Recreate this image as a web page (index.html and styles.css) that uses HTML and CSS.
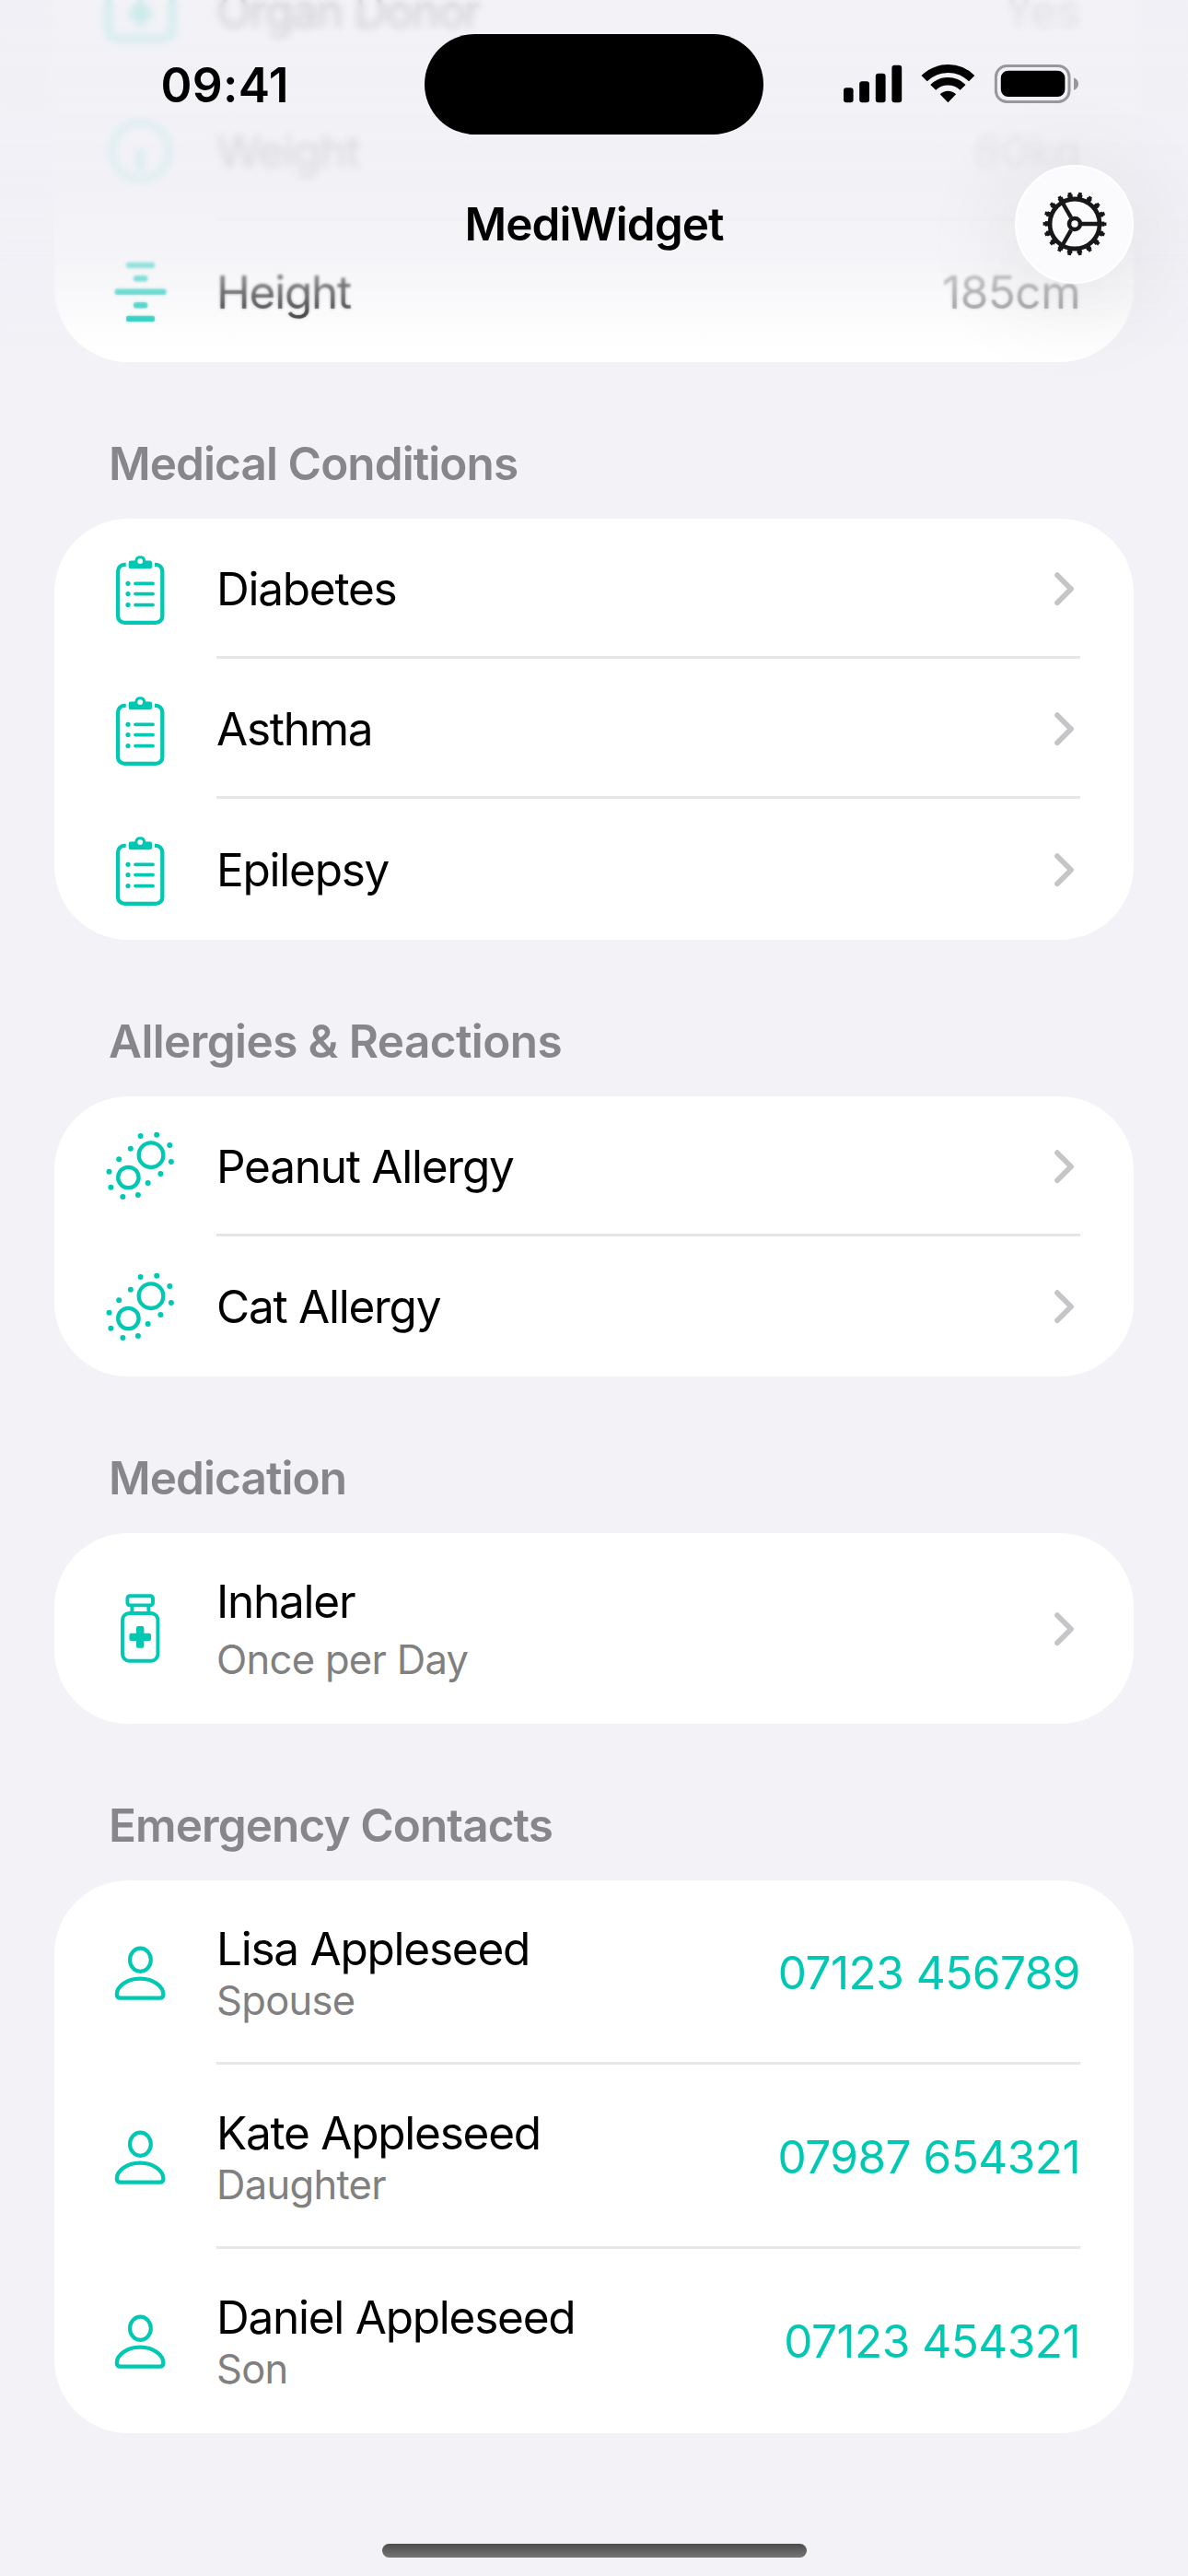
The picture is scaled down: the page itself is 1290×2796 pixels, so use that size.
FILE: index.html
```html
<!DOCTYPE html>
<html lang="en">
<head>
<meta charset="utf-8">
<title>MediWidget</title>
<link rel="stylesheet" href="styles.css">
</head>
<body>
<svg class="sprite" width="0" height="0" aria-hidden="true">
  <symbol id="donor" viewBox="0 0 90 90">
    <rect x="11" y="13" width="69" height="64" rx="8" fill="none" stroke="currentColor" stroke-width="7"/>
    <path d="M45.500 34L60 49.500 45.500 66 31 49.500z" fill="currentColor"/>
  </symbol>
  <symbol id="weight" viewBox="0 0 90 90">
    <circle cx="45.500" cy="46" r="31" fill="none" stroke="currentColor" stroke-width="6"/>
    <path d="M45.500 44v24" stroke="currentColor" stroke-width="9"/>
  </symbol>
  <symbol id="height" viewBox="0 0 90 90">
    <g fill="currentColor">
      <rect x="30" y="14.500" width="31" height="6.600" rx="2"/>
      <rect x="37.800" y="29" width="15.600" height="6.600" rx="3"/>
      <rect x="17.600" y="43.500" width="56" height="6.600" rx="2.500"/>
      <rect x="37.800" y="58" width="15.600" height="6.600" rx="3"/>
      <rect x="30" y="72.700" width="31" height="6.600" rx="2"/>
    </g>
  </symbol>
  <symbol id="clipboard" viewBox="0 0 90 90">
    <path d="M29.700 20.900h-1.600a7 7 0 0 0-7 7v49a7 7 0 0 0 7 7h34.200a7 7 0 0 0 7-7v-49a7 7 0 0 0-7-7H61" fill="none" stroke="currentColor" stroke-width="4.300"/>
    <path fill-rule="evenodd" d="M35 16.600h4.300a6 6 0 0 1 11.900 0H56q2 0 2 2v4.700q0 2-2 2H34.700q-2 0-2-2v-4.700q0-2 2.300-2zM45.200 14.200a2.900 2.900 0 1 0 0 5.800 2.900 2.900 0 0 0 0-5.800z" fill="currentColor"/>
    <g fill="currentColor"><circle cx="32" cy="41.300" r="2.600"/><circle cx="32" cy="52.600" r="2.600"/><circle cx="32" cy="64.600" r="2.600"/></g>
    <path d="M40 41.300h19M40 52.600h19M40 64.600h19" stroke="currentColor" stroke-width="3.800" stroke-linecap="round"/>
  </symbol>
  <symbol id="allergen" viewBox="0 0 90 90">
    <g fill="none" stroke="currentColor" stroke-width="4.300"><circle cx="57" cy="34.700" r="13.300"/><circle cx="32.400" cy="59" r="11.200"/></g>
    <g fill="currentColor">
      <circle cx="45.600" cy="14" r="3"/><circle cx="63.200" cy="12.700" r="3"/><circle cx="77.300" cy="24" r="3"/>
      <circle cx="78.900" cy="42" r="3"/><circle cx="67.400" cy="55" r="3"/><circle cx="53.600" cy="65" r="3"/>
      <circle cx="42.900" cy="78" r="3"/><circle cx="26.400" cy="80" r="3"/><circle cx="13.400" cy="69.700" r="3"/>
      <circle cx="11.500" cy="52.700" r="3"/><circle cx="22.200" cy="39.300" r="3"/><circle cx="34.800" cy="27.700" r="3"/>
    </g>
  </symbol>
  <symbol id="bottle" viewBox="0 0 90 90">
    <g fill="none" stroke="currentColor" stroke-width="3.900">
      <rect x="31.400" y="11.200" width="27.600" height="10.200" rx="2.600"/>
      <path d="M36.400 22v7.500M54.400 22v7.500"/>
      <rect x="26" y="30" width="38.400" height="51.800" rx="7.500"/>
    </g>
    <path d="M43 44h4.400q2 0 2 2v5.700h5.600q2 0 2 2v4.400q0 2-2 2h-5.600v5.700q0 2-2 2H43q-2 0-2-2v-5.700h-5.600q-2 0-2-2v-4.400q0-2 2-2H41V46q0-2 2-2z" fill="currentColor"/>
  </symbol>
  <symbol id="person" viewBox="0 0 90 90">
    <g fill="none" stroke="currentColor" stroke-width="4.200">
      <ellipse cx="45.400" cy="32.200" rx="11.400" ry="12.600"/>
      <path d="M19.800 69.800C19.800 62 29.500 52.600 45.100 52.600S70.400 62 70.400 69.800Q70.400 73.700 66.600 73.700H23.600Q19.800 73.700 19.800 69.800z"/>
    </g>
  </symbol>
  <symbol id="chevron" viewBox="0 0 24 38">
    <path d="M4 4.200l15 15-15 15" fill="none" stroke="currentColor" stroke-width="5.800" stroke-linecap="round" stroke-linejoin="round"/>
  </symbol>
</svg>

<main class="list">
  <section class="card profile">
    <div class="row"><svg class="icon"><use href="#donor"/></svg><div class="body"><span class="label">Organ Donor</span><span class="value">Yes</span></div></div>
    <div class="row"><svg class="icon"><use href="#weight"/></svg><div class="body"><span class="label">Weight</span><span class="value">80kg</span></div></div>
    <div class="row"><svg class="icon"><use href="#height"/></svg><div class="body"><span class="label">Height</span><span class="value">185cm</span></div></div>
  </section>

  <h2 class="heading">Medical Conditions</h2>
  <section class="card">
    <div class="row"><svg class="icon"><use href="#clipboard"/></svg><div class="body"><span class="label">Diabetes</span><svg class="chevron"><use href="#chevron"/></svg></div></div>
    <div class="row"><svg class="icon"><use href="#clipboard"/></svg><div class="body"><span class="label">Asthma</span><svg class="chevron"><use href="#chevron"/></svg></div></div>
    <div class="row"><svg class="icon"><use href="#clipboard"/></svg><div class="body"><span class="label">Epilepsy</span><svg class="chevron"><use href="#chevron"/></svg></div></div>
  </section>

  <h2 class="heading heading-wide">Allergies &amp; Reactions</h2>
  <section class="card">
    <div class="row"><svg class="icon"><use href="#allergen"/></svg><div class="body"><span class="label">Peanut Allergy</span><svg class="chevron"><use href="#chevron"/></svg></div></div>
    <div class="row"><svg class="icon"><use href="#allergen"/></svg><div class="body"><span class="label">Cat Allergy</span><svg class="chevron"><use href="#chevron"/></svg></div></div>
  </section>

  <h2 class="heading">Medication</h2>
  <section class="card medication">
    <div class="row"><svg class="icon"><use href="#bottle"/></svg><div class="body"><div class="stack"><span class="label">Inhaler</span><span class="detail">Once per Day</span></div><svg class="chevron"><use href="#chevron"/></svg></div></div>
  </section>

  <h2 class="heading">Emergency Contacts</h2>
  <section class="card contacts">
    <div class="row"><svg class="icon"><use href="#person"/></svg><div class="body"><div class="stack"><span class="label">Lisa Appleseed</span><span class="detail">Spouse</span></div><span class="phone">07123 456789</span></div></div>
    <div class="row"><svg class="icon"><use href="#person"/></svg><div class="body"><div class="stack"><span class="label">Kate Appleseed</span><span class="detail">Daughter</span></div><span class="phone">07987 654321</span></div></div>
    <div class="row"><svg class="icon"><use href="#person"/></svg><div class="body"><div class="stack"><span class="label">Daniel Appleseed</span><span class="detail">Son</span></div><span class="phone">07123 454321</span></div></div>
  </section>
</main>

<div class="haze haze-strong"></div>
<div class="haze haze-light"></div>
<header class="top">
  <div class="status">
    <span class="time">09:41</span>
    <div class="island"></div>
    <svg class="indicators" width="258" height="44" viewBox="915 69 258 44">
      <g><rect x="916" y="95.300" width="10.600" height="15.900" rx="3"/><rect x="933.200" y="88.300" width="10.800" height="22.900" rx="3"/><rect x="950.800" y="79.700" width="10.800" height="31.500" rx="3"/><rect x="968.400" y="70.700" width="10.800" height="40.500" rx="3"/></g>
      <g fill="none" stroke="#000"><path d="M1003.600 85.200a36.500 36.500 0 0 1 51.600 0" stroke-width="8.800"/><path d="M1013.200 94.900a22.900 22.900 0 0 1 32.400 0" stroke-width="8.400"/></g>
      <path d="M1029.400 111.200l-8.700-8.900a12.400 12.400 0 0 1 17.400 0z"/>
      <rect x="1081.400" y="71.500" width="79.600" height="39" rx="12" fill="none" stroke="#98989b" stroke-width="3"/>
      <rect x="1086.800" y="76.700" width="69.600" height="28.400" rx="8"/>
      <path d="M1166 84.300q5 2 5 6.800t-5 6.800z" fill="#98989b"/>
    </svg>
  </div>
  <div class="navbar">
    <h1 class="title">MediWidget</h1>
    <button class="settings" aria-label="Settings">
      <svg width="72" height="72" viewBox="-36 -36 72 72" fill="none" stroke="#17171a">
        <circle r="27" stroke-width="4.800"/>
        <circle r="30.300" stroke-width="4" stroke-dasharray="5.400 5.177" stroke-dashoffset="2.700"/>
        <circle r="32.600" stroke-width="3.600" stroke-dasharray="3.700 7.680" stroke-dashoffset="1.850"/>
        <circle r="6" stroke-width="4.600"/>
        <path d="M8 0H26M-4 -6.900L-13 -22.500M-4 6.900L-13 22.500" stroke-width="4.400"/>
      </svg>
    </button>
  </div>
</header>
<div class="home-indicator"></div>
</body>
</html>
```
FILE: styles.css
```css
* { box-sizing: border-box; }

body {
  margin: 0;
  width: 1290px;
  height: 2796px;
  overflow: hidden;
  position: relative;
  background: #f2f2f7;
  color: #000;
  font-family: Inter, "Liberation Sans", sans-serif;
}

.sprite { position: absolute; }

.list {
  display: flex;
  flex-direction: column;
  padding: 0 59px;
  margin-top: -64.300px;
}

.card {
  background: #fff;
  border-radius: 80px;
  overflow: hidden;
}

.profile { border-radius: 0 0 80px 80px; }

.row {
  display: flex;
  align-items: stretch;
  height: 152.330px;
  padding: 0 58px 0 48px;
}

.icon {
  width: 90px;
  height: 90px;
  margin: 29.700px 38px 0 0;
  flex: none;
  color: #00c8b3;
}

.body {
  flex: 1;
  display: flex;
  align-items: center;
  justify-content: space-between;
  padding-top: 3px;
  border-bottom: 3px solid #e6e6e6;
}

.row:last-child .body { border-color: transparent; }

.label {
  font-size: 49.500px;
  line-height: 60px;
  letter-spacing: -1.250px;
}

.value {
  font-size: 49.500px;
  line-height: 60px;
  letter-spacing: -0.500px;
  color: #808080;
}

.detail {
  font-size: 43.500px;
  line-height: 54px;
  letter-spacing: -0.700px;
  color: #808080;
}

.phone {
  font-size: 49.500px;
  line-height: 60px;
  letter-spacing: -0.520px;
  color: #00c8b3;
}

.stack { display: flex; flex-direction: column; }

.medication .row { height: 207px; }
.medication .icon { margin-top: 57px; }
.medication .stack { gap: 6px; }
.contacts .row { height: 200px; }
.contacts .icon { margin-top: 53.500px; }
.contacts .detail { margin-top: -1px; }

.chevron {
  width: 24px;
  height: 38px;
  margin-right: 5px;
  color: #c5c5c7;
}

.heading {
  margin: 0;
  height: 170px;
  padding: 80px 0 0 59px;
  font-size: 49.500px;
  line-height: 60px;
  font-weight: 600;
  letter-spacing: -0.920px;
  color: #87868b;
}

.heading-wide { letter-spacing: -0.600px; }

/* Scroll-edge effect under the navigation bar */
.haze {
  position: absolute;
  left: 0;
  right: 0;
  top: 0;
}

.haze-strong {
  height: 240px;
  backdrop-filter: blur(4px);
}

.haze-light {
  height: 390px;
  backdrop-filter: blur(1.800px);
  -webkit-mask-image: linear-gradient(#000 300px, transparent 375px);
  mask-image: linear-gradient(#000 300px, transparent 375px);
}

.top {
  position: absolute;
  left: 0;
  right: 0;
  top: 0;
  height: 390px;
  background: linear-gradient(
    rgba(240, 240, 245, 0.850) 0,
    rgba(240, 240, 245, 0.890) 110px,
    rgba(240, 240, 245, 0.900) 200px,
    rgba(240, 240, 245, 0.640) 285px,
    rgba(240, 240, 245, 0.400) 325px,
    rgba(240, 240, 245, 0.150) 355px,
    rgba(240, 240, 245, 0) 385px);
}

.status {
  display: grid;
  grid-template-columns: 461px 368px 461px;
  height: 146px;
  padding-top: 37px;
}

.time {
  padding: 25px 0 0 174.500px;
  font-size: 51.500px;
  line-height: 60px;
  font-weight: 600;
  letter-spacing: 0.300px;
}

.island {
  height: 109px;
  border-radius: 55px;
  background: #000;
}

.indicators { margin: 32px 0 0 86px; }

.navbar {
  display: grid;
  grid-template-columns: 1fr auto 1fr;
  padding: 32.500px 59px 0;
}

.title {
  grid-column: 2;
  margin: 34px 0 0;
  font-size: 49.500px;
  line-height: 60px;
  font-weight: 600;
  letter-spacing: -1px;
}

.settings {
  justify-self: end;
  display: flex;
  align-items: center;
  justify-content: center;
  width: 129px;
  height: 129px;
  padding: 0;
  border: 2px solid #fff;
  border-radius: 50%;
  background: #fbfbfe;
  box-shadow: 0 16px 110px 10px rgba(0, 0, 0, 0.080);
}

.home-indicator {
  position: absolute;
  left: 415px;
  top: 2761px;
  width: 461px;
  height: 15px;
  border-radius: 8px;
  background: linear-gradient(#4c4c4c, #757575);
}
```
